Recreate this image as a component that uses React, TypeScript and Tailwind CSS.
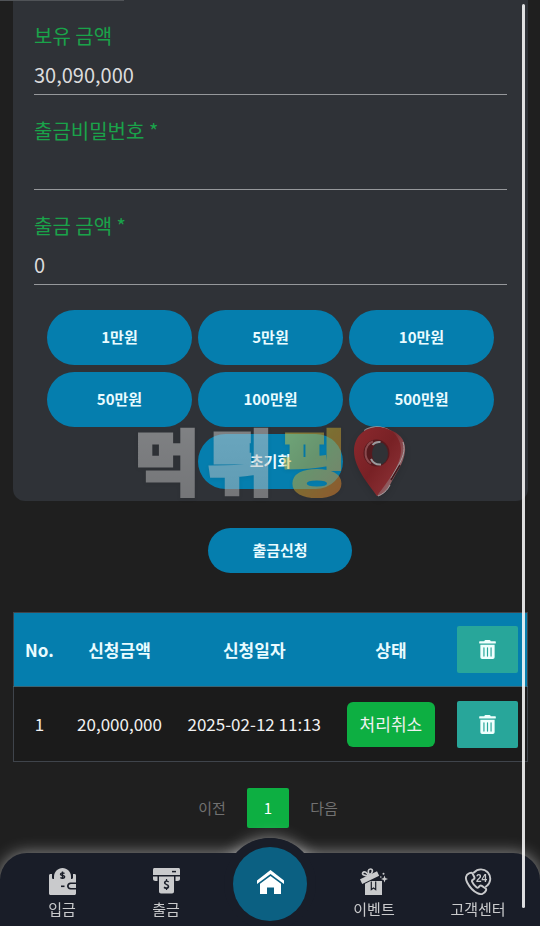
import type { ReactNode } from "react";
import { FaTrashAlt } from "react-icons/fa";

const amounts = ["1만원", "5만원", "10만원", "50만원", "100만원", "500만원"];

const rows = [
  { no: 1, amount: "20,000,000", date: "2025-02-12 11:13", status: "처리취소" },
];

const Field = ({ id, label, value = "", type = "text" }: any) => {
  return (
    <div className="flex h-[95px] flex-col justify-end border-b border-[#96989b]">
      <label htmlFor={id} className="text-xl leading-7 text-[#1aa34a]">
        {label}
      </label>
      <input
        id={id}
        type={type}
        defaultValue={value}
        className="mt-2 h-9 w-full bg-transparent pb-1 text-xl text-[#dcdcdd] outline-none"
      />
    </div>
  );
};

const AmountButton = ({ children, className = "" }: any) => {
  return (
    <button
      type="button"
      className={`h-[55px] rounded-full bg-[#057eae] text-[15px] font-bold text-[#e9fbff] ${className}`}
    >
      {children}
    </button>
  );
};

const DeleteButton = ({ label }: { label: string }) => {
  return (
    <button
      type="button"
      aria-label={label}
      className="flex h-[47px] w-[61px] items-center justify-center rounded-xs bg-[#28a69a] text-[#effffd]"
    >
      <FaTrashAlt size={19} />
    </button>
  );
};

const WalletIcon = () => (
  <svg viewBox="0 0 27 27" className="size-[27px]" fill="currentColor">
    <path d="M5 8.500C5 4 9 0 13.500 0S22 4 22 8.500V11H5Z" />
    <path d="M1.500 6H3v3.500c0 1 .7 1.500 1.500 1.500h18c1 0 1.500-.6 1.500-1.500V6h1.500c1 0 1.500.7 1.500 1.500v7h-5.500c-2 0-3.500 1.600-3.500 3.500s1.500 3.500 3.500 3.500H27v4c0 .8-.7 1.500-1.500 1.500h-24C.7 27 0 26.300 0 25.500v-18C0 6.700.7 6 1.500 6Z" />
    <path d="M22 16h5v4h-5c-3 0-3-4 0-4Z" />
    <path d="M4 6v4M23 6v4" stroke="#191d28" strokeWidth="1.400" />
    <path d="M12 18.300h3.500" stroke="#191d28" strokeWidth="1.600" />
    <path
      d="M15.500 5.500c-1-1-4-.9-4 .8s4.200.7 4.200 2.500-3 2-4.300.7M13.500 3.500v7"
      fill="none"
      stroke="#191d28"
      strokeWidth="1.400"
    />
  </svg>
);

const AtmIcon = () => (
  <svg viewBox="0 0 27 26" className="h-[26px] w-[27px]" fill="currentColor">
    <path d="M1.500 0h24c.9 0 1.500.6 1.500 1.500V7H0V1.500C0 .6.600 0 1.500 0Z" />
    <path d="M0 8.500h4.500V13H2.500C1 13 0 12 0 10.700ZM22.500 8.500H27v2.200c0 1.300-1 2.300-2.500 2.300h-2Z" />
    <path d="M6 8.500h15v15c0 1-.8 2-2 2H8c-1.200 0-2-1-2-2Z" />
    <path d="M19 3.600h4" stroke="#191d28" strokeWidth="1.500" />
    <text
      x="13.500"
      y="21"
      textAnchor="middle"
      fontSize="12"
      fontWeight="700"
      fill="#191d28"
    >
      $
    </text>
  </svg>
);

const GiftIcon = () => (
  <svg viewBox="0 0 28 27" className="h-[27px] w-7" fill="currentColor">
    <path d="M0 11.300 17 3.200l2.200 4.600L2.200 16Z" />
    <g fill="none" stroke="currentColor" strokeWidth="1.700">
      <path d="M8.500 8C5 8 1.500 6.700 2.800 4.700S7.500 4.500 8.500 8Z" />
      <path d="M9.500 7c-2-3-1.500-6 1-6s3 3.500-1 6Z" />
    </g>
    <path d="M5 15.800 10.500 13H22v14H5Z" />
    <path
      d="M11.300 13.500v8l2.200-1.500 2.200 1.500v-8"
      fill="none"
      stroke="#191d28"
      strokeWidth="1.200"
    />
    <path d="m24.500 7.500.9 2.600 2.600.9-2.600.9-.9 2.600-.9-2.600-2.600-.9 2.600-.9Z" />
    <circle cx="23.500" cy="5.700" r="1" />
    <circle cx="20.800" cy="9" r=".8" />
  </svg>
);

const SupportIcon = () => (
  <svg
    viewBox="0 0 27 27"
    className="size-[27px]"
    fill="none"
    stroke="currentColor"
    strokeWidth="1.900"
    strokeLinecap="round"
    strokeLinejoin="round"
  >
    <path d="M9 4.500A9.300 9.300 0 1 1 21 18.500" />
    <path d="M4.500 5.200C.5 7 0 10.200 2.200 14.500c2.600 4.900 5.800 8.500 10.200 10.700 3.700 1.800 6.900.8 8.600-2.700.4-1 .2-1.800-.7-2.300l-3.500-2.300c-.9-.6-1.600-.4-2.300.3l-1 1.200c-.7.6-1.400.4-2-.1-1.900-1.500-3.400-3.400-4.300-5.500-.4-.8-.2-1.500.5-1.900l1-.7c.8-.5 1-1.300.6-2.200L7.500 5.500c-.6-1.100-1.800-.9-3-.3Z" />
    <text
      x="16.500"
      y="13.500"
      textAnchor="middle"
      fontSize="10"
      fontWeight="800"
      fill="currentColor"
      stroke="none"
      className="font-['Liberation_Sans',sans-serif]"
    >
      24
    </text>
  </svg>
);

const HomeIcon = () => (
  <svg viewBox="0 0 27 24" className="mb-1 h-6 w-[27px]" fill="#fff">
    <path d="M13.500 0 27 10.500V14L13.500 4 0 14v-3.500Z" />
    <path d="M13.500 6 24 13.800V24h-7v-6.500h-7V24H3V13.800Z" />
  </svg>
);

const PinIcon = () => (
  <svg viewBox="0 0 52 72" className="mt-2 h-[72px] w-[52px] drop-shadow-md">
    <defs>
      <linearGradient id="pinFace" x1="0" y1="0" x2="1" y2="1">
        <stop offset="0" stopColor="#8c292e" />
        <stop offset=".5" stopColor="#782125" />
        <stop offset="1" stopColor="#92363b" />
      </linearGradient>
      <linearGradient id="pinEdge" x1="0" y1="0" x2="1" y2="1">
        <stop offset="0" stopColor="#7c7d80" />
        <stop offset=".25" stopColor="#b0b0b1" />
        <stop offset=".38" stopColor="#7a2529" />
        <stop offset=".65" stopColor="#8c5054" />
        <stop offset="1" stopColor="#9c9a9c" />
      </linearGradient>
    </defs>
    <path
      d="M10 4C17-1 28-1 36 4c9 3 16 10 15 21-1 13-10 23-15 34-3 6-8 11-13 11Z"
      fill="url(#pinEdge)"
    />
    <path
      d="M23 70C17 61 0 43 0 25 0 10 11 1 24 1s23 10 23 23c0 16-14 32-24 46Z"
      fill="url(#pinFace)"
    />
    <ellipse cx="22.500" cy="27" rx="13" ry="13.500" fill="#551a1e" />
    <path
      d="M19 15.500c-9 3-10 17-2 22"
      fill="none"
      stroke="#8a4a4e"
      strokeWidth="2"
    />
    <ellipse cx="26" cy="27.500" rx="8" ry="11" fill="#303236" />
    <path
      d="M17 33c2 4 5 6 10 5.500M18.500 19c2-2.500 4.500-3.500 8-3"
      fill="none"
      stroke="#9a9a9d"
      strokeWidth="2"
    />
    <path
      d="M49 16c3 9-1 17-5 24l-7 12M36 59c-3 6-7 9-12 11"
      fill="none"
      stroke="#a4a2a4"
      strokeWidth="1"
    />
    <path d="m37 54 9-15" stroke="#401a1e" strokeWidth="1.500" />
  </svg>
);

const Watermark = () => {
  return (
    <div className="pointer-events-none absolute inset-x-0 bottom-[3px] flex h-20 items-center justify-center gap-2 whitespace-nowrap">
      <div className="flex gap-2 text-[71px] leading-[80px] font-black opacity-50 drop-shadow-sm">
        <span className="bg-linear-to-b from-[#d2d2d2] to-[#b9b9b9] bg-clip-text text-transparent [-webkit-text-stroke:3px_transparent]">
          먹
        </span>
        <span className="bg-linear-to-b from-[#d2d2d2] to-[#b9b9b9] bg-clip-text text-transparent [-webkit-text-stroke:3px_transparent]">
          튀
        </span>
        <span className="bg-linear-to-br from-[#ddd84b] via-[#c8a92e] to-[#ed7d28] bg-clip-text text-transparent [-webkit-text-stroke:3px_transparent]">
          핑
        </span>
      </div>
      <PinIcon />
    </div>
  );
};

const NavItem = ({ label, icon }: { label: string; icon: ReactNode }) => {
  return (
    <a
      href="#"
      className="flex flex-1 flex-col items-center pt-[14px] text-[15px] text-[#c9cacc]"
    >
      <span className="flex h-7 items-center">{icon}</span>
      <span className="leading-7">{label}</span>
    </a>
  );
};

const BottomNav = () => {
  return (
    <nav className="fixed inset-x-0 bottom-0">
      <div className="absolute -top-[15px] left-1/2 size-[92px] -translate-x-1/2 rounded-full bg-[#191d28] shadow-[0_0_16px_rgba(255,255,255,0.5)]" />
      <div className="relative flex h-[73px] rounded-t-[27px] bg-[#191d28] px-[10px] shadow-[0_0_16px_rgba(255,255,255,0.5)]">
        <NavItem label="입금" icon={<WalletIcon />} />
        <NavItem label="출금" icon={<AtmIcon />} />
        <div className="flex flex-1 justify-center">
          <span className="absolute -top-[15px] size-[92px] rounded-full bg-[#191d28]" />
          <a
            href="#"
            aria-label="홈"
            className="absolute -top-[6px] flex size-[74px] items-center justify-center rounded-full bg-[#0b6082]"
          >
            <HomeIcon />
          </a>
        </div>
        <NavItem label="이벤트" icon={<GiftIcon />} />
        <NavItem label="고객센터" icon={<SupportIcon />} />
      </div>
    </nav>
  );
};

const App = () => {
  return (
    <div className="min-h-screen bg-[#1f1f1f] font-['Noto_Sans_CJK_KR',sans-serif] text-white">
      <main className="pr-3 pb-[98px] pl-[13px]">
        <form>
          <section className="relative rounded-b-xl bg-[#2f3237] px-[21px] pb-3">
            <Field id="balance" label="보유 금액" value="30,090,000" />
            <Field id="password" label="출금비밀번호 *" type="password" />
            <Field id="amount" label="출금 금액 *" value="0" />
            <div className="mx-[13px] mt-[25px] grid grid-cols-3 gap-x-[6px] gap-y-[7px]">
              {amounts.map((amount) => (
                <AmountButton key={amount}>{amount}</AmountButton>
              ))}
              <AmountButton className="col-start-2">초기화</AmountButton>
            </div>
            <Watermark />
          </section>
          <div className="mt-[27px] flex justify-center pl-[19px]">
            <button
              type="submit"
              className="h-[45px] w-36 rounded-full bg-[#057eae] text-[15px] font-bold text-[#e9fbff]"
            >
              출금신청
            </button>
          </div>
        </form>

        <table className="mt-[39px] w-full border-collapse border border-[#3f444b] text-center text-[17px] whitespace-nowrap">
          <thead>
            <tr className="h-[74px] border-b border-[#3b6473] bg-[#057eae] text-[#e9fbff]">
              <th className="px-[10px]">No.</th>
              <th className="px-[10px]">신청금액</th>
              <th className="px-[10px]">신청일자</th>
              <th className="px-[10px]">상태</th>
              <th className="w-20 px-[9px]">
                <DeleteButton label="전체 삭제" />
              </th>
            </tr>
          </thead>
          <tbody>
            {rows.map((row) => (
              <tr key={row.no} className="h-[75px] bg-[#1b1b1b] text-[#f1f1f1]">
                <td className="px-[10px]">{row.no}</td>
                <td className="px-[10px]">{row.amount}</td>
                <td className="px-[10px]">{row.date}</td>
                <td className="px-[10px]">
                  <button
                    type="button"
                    className="h-[45px] rounded-md bg-[#0daf42] px-[13px]"
                  >
                    {row.status}
                  </button>
                </td>
                <td className="px-[9px]">
                  <DeleteButton label="삭제" />
                </td>
              </tr>
            ))}
          </tbody>
        </table>

        <div className="mt-[26px] flex items-center justify-center gap-2 pr-[5px] text-[15px] text-[#717171]">
          <button type="button" className="w-[54px]">
            이전
          </button>
          <button
            type="button"
            className="h-10 w-[42px] rounded-xs bg-[#0daf42] text-white"
          >
            1
          </button>
          <button type="button" className="w-[54px]">
            다음
          </button>
        </div>
      </main>

      <BottomNav />
      <div className="fixed top-1 right-[15px] bottom-[18px] w-[3px] rounded-full bg-white/85" />
      <div className="fixed top-0 left-0 h-px w-[23%] bg-[#505357]" />
    </div>
  );
};

export default App;
